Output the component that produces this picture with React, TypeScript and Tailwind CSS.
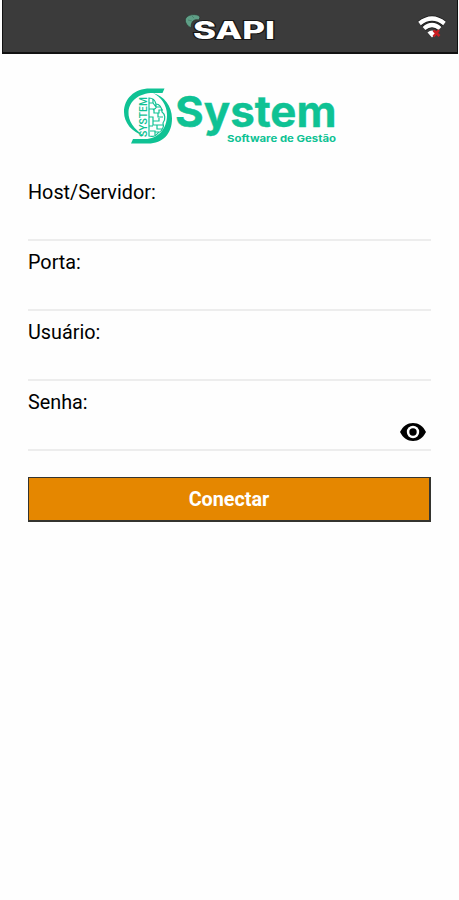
import { useState } from 'react'

const fields = [
  { id: 'host', label: 'Host/Servidor:' },
  { id: 'port', label: 'Porta:' },
  { id: 'user', label: 'Usuário:' },
  { id: 'password', label: 'Senha:' },
]

function SapiLogo() {
  return (
    <svg width="100" height="34" viewBox="0 0 100 34" className="block" role="img" aria-label="SAPI">
      <path d="M11 19C4 15 4 9 8 7c4-2 10-2 12 1l-1 3c-5-1-8 1-8 8z" fill="#5f9f87" stroke="#29302d" strokeWidth="0.7" />
      <path d="M8 11l4 1M12 7l2 2" stroke="#427965" strokeWidth="0.7" />
      <text
        x="13"
        y="29.500"
        textLength="82"
        lengthAdjust="spacingAndGlyphs"
        fill="#fff"
        stroke="#171717"
        strokeWidth="2"
        paintOrder="stroke"
        className="font-[Inter,sans-serif] text-[24px] font-extrabold"
      >
        SAPI
      </text>
    </svg>
  )
}

function WifiIcon() {
  return (
    <svg width="30" height="24" viewBox="0 0 30 24" className="block">
      <g fill="none" stroke="#191919" strokeWidth="6">
        <path d="M2.500 9.500Q15-0.500 27.500 9.500" />
        <path d="M7 14.500Q15 7.500 23 14.500" />
      </g>
      <g fill="none" stroke="#fff" strokeWidth="4.200">
        <path d="M2.500 9.500Q15-0.500 27.500 9.500" />
        <path d="M7 14.500Q15 7.500 23 14.500" />
      </g>
      <path d="M10.500 18.500Q15 14.500 19.500 18.500L15 23.500z" fill="#fff" />
      <path d="M16.500 16.500l6 5.500M22 16l-5.500 6.500" stroke="#c91c20" strokeWidth="2.500" />
    </svg>
  )
}

function SystemLogo() {
  return (
    <svg width="220" height="64" viewBox="0 0 220 64" className="block" fill="#0fc294">
      {/* Emblem */}
      <path d="M44.500 2.500H30C14 2.500 4 13 4 26c0 11 8 20 20 24C14 43 8 35 8.500 26 9 15 19 7 33 7h9.500z" />
      <path d="M33 7c8 4 14 12 14 22 0 14-9 24-22 24H13l-2 4.500h17c15 0 24-10 24-25C52 20 44 10 33 7z" />
      <text
        transform="translate(27 51) rotate(-90)"
        textLength="40"
        lengthAdjust="spacingAndGlyphs"
        className="font-[Roboto,sans-serif] text-[10px] font-medium"
      >
        SYSTEM
      </text>
      <g fill="none" stroke="#0fc294" strokeWidth="1.200">
        <path d="M29 12v38c4 1 7 0 9-3 5-2 6-7 5-10 3-4 2-9-1-11 0-5-3-8-6-8-1-4-4-6-7-6z" />
        <path d="M29 17h4l3 4h4M33 13v4M36 18v4M29 23h5v4h5v-3h4M33 24l3-2M38 27v4h5M29 31h4v4h6v-3M33 35v4h4v4h5M29 40h4M37 39h6M30 45h5v4M35 46h4" />
      </g>
      {/* Wordmark */}
      <text
        x="55"
        y="41.300"
        textLength="161.500"
        lengthAdjust="spacingAndGlyphs"
        stroke="#0fc294"
        strokeWidth="0.400"
        className="font-[Inter,sans-serif] text-[43px] font-bold"
      >
        System
      </text>
      <text
        x="107"
        y="55.500"
        textLength="109"
        lengthAdjust="spacingAndGlyphs"
        className="font-[Inter,sans-serif] text-[9.500px] font-bold"
      >
        Software de Gestão
      </text>
    </svg>
  )
}

function EyeIcon() {
  return (
    <svg width="26" height="18" viewBox="0 0 26 18" className="block">
      <path d="M0 9C3 3 7.500 0 13 0s10 3 13 9c-3 6-7.500 9-13 9S3 15 0 9z" fill="#000" />
      <circle cx="13" cy="9" r="6.200" fill="#fff" />
      <circle cx="13" cy="9" r="3.700" fill="#000" />
    </svg>
  )
}

export default function App() {
  const [showPassword, setShowPassword] = useState(false)

  return (
    <div className="h-[900px] w-full overflow-hidden bg-[#fefefe] font-[Roboto,sans-serif] text-black">
      {/* Top bar */}
      <header className="ml-0.5 mr-px grid h-[54px] grid-cols-[1fr_100px_1fr] items-center border-x border-b-2 border-[#111] bg-[#3b3b3b]">
        <span />
        <SapiLogo />
        <div className="flex justify-end pr-[10px]">
          <WifiIcon />
        </div>
      </header>

      <main className="pl-7 pr-7">
        <div className="flex h-[117px] justify-center pt-8">
          <SystemLogo />
        </div>

        <form onSubmit={(e) => e.preventDefault()}>
          {fields.map((field) => (
            <div key={field.id} className="flex h-[70px] flex-col border-b-2 border-[#ededed] pt-2.5">
              <label htmlFor={field.id} className="text-[19.800px] leading-6">
                {field.label}
              </label>
              <div className="flex flex-1 items-center">
                <input
                  id={field.id}
                  type={field.id === 'password' && !showPassword ? 'password' : 'text'}
                  className="h-full min-w-0 flex-1 bg-transparent text-[20px] outline-none"
                />
                {field.id === 'password' && (
                  <button
                    type="button"
                    aria-label="Mostrar senha"
                    onClick={() => setShowPassword(!showPassword)}
                    className="mr-[5px]"
                  >
                    <EyeIcon />
                  </button>
                )}
              </div>
            </div>
          ))}

          <button
            type="submit"
            className="mt-[26px] h-[45px] w-full border border-b-2 border-r-2 border-[#34342f] bg-[#e58700] pt-0.5 text-[19.800px] font-bold text-white"
          >
            Conectar
          </button>
        </form>
      </main>
    </div>
  )
}
